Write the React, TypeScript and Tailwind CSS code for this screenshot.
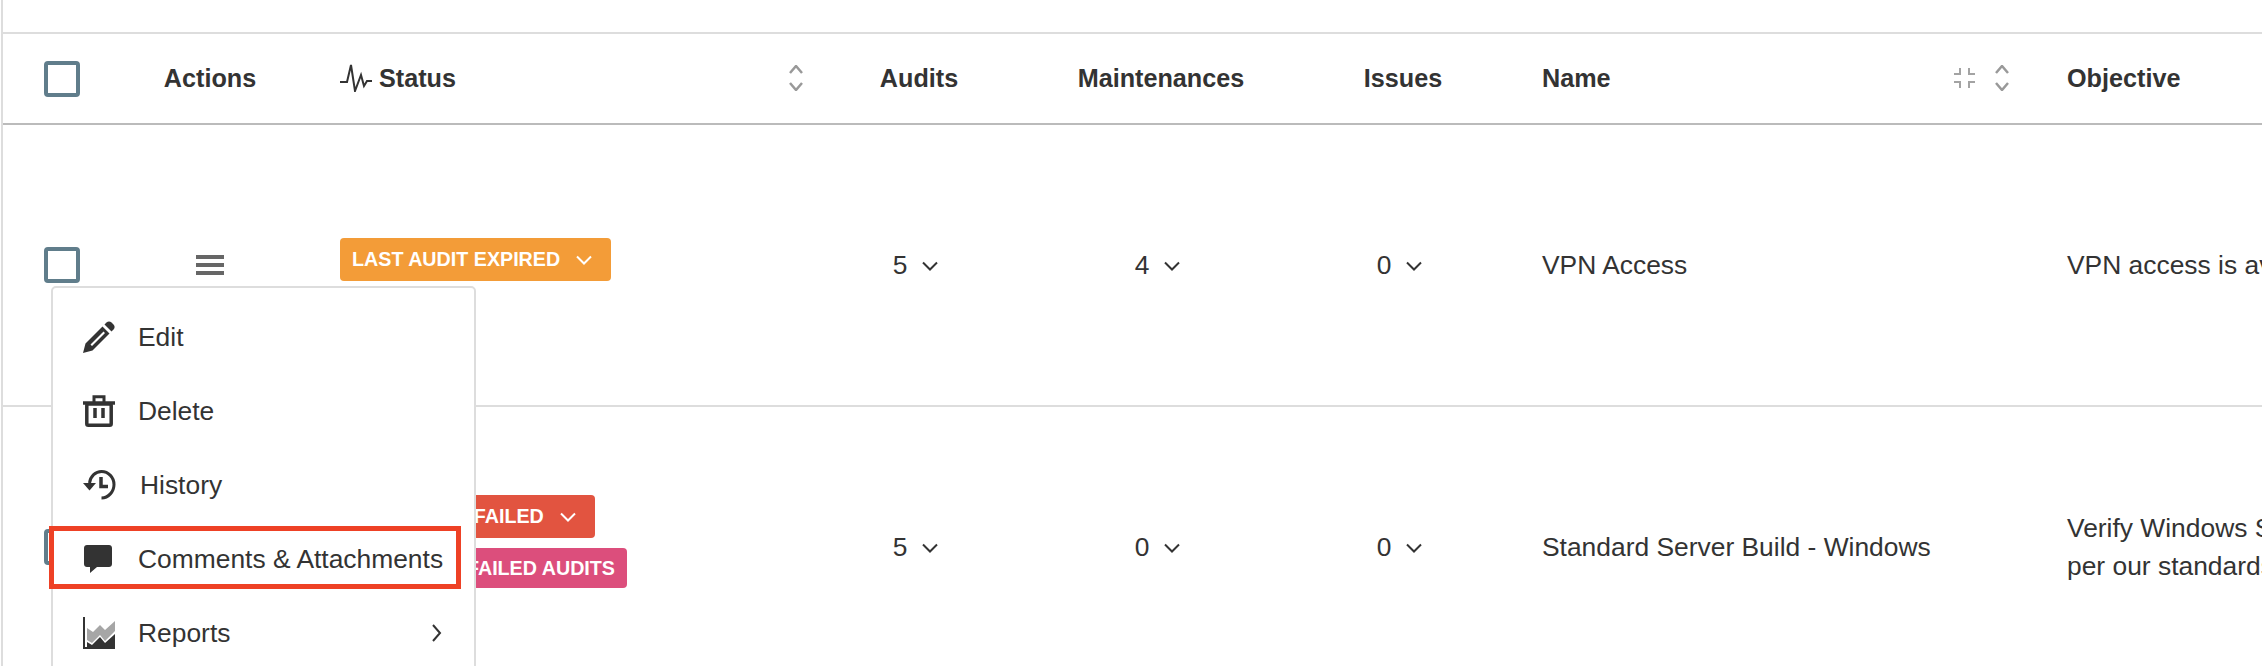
import React from "react";

const rowGrid =
  "grid grid-cols-[137px_140px_540px_198px_286px_198px_525px_1fr] items-center";

function Checkbox() {
  return <span className="block w-9 h-9 border-4 border-[#607d8b] rounded-[4px] bg-white" />;
}

function SortIcon() {
  return (
    <svg width="14" height="26" viewBox="0 0 14 26" fill="none" stroke="#999" strokeWidth="2.500">
      <path d="M1 8l6-7 6 7M1 18l6 7 6-7" />
    </svg>
  );
}

function Chevron({ color = "#333", className = "" }: { color?: string; className?: string }) {
  return (
    <svg width="18" height="10" viewBox="0 0 18 10" fill="none" stroke={color} strokeWidth="2" className={className}>
      <path d="M2 1.500l7 7 7-7" />
    </svg>
  );
}

function Count({ value }: { value: number }) {
  return (
    <div className="flex items-center justify-center gap-[14px] pr-[6px] pt-[2px]">
      <span>{value}</span>
      <Chevron />
    </div>
  );
}

function Badge({ label, bg, chevron, className = "" }: { label: string; bg: string; chevron?: boolean; className?: string }) {
  return (
    <span className={`inline-flex items-center rounded-[4px] pl-3 pt-[1px] text-white font-bold text-[19.700px] leading-none ${bg} ${className}`}>
      {label}
      {chevron && <Chevron color="#fff" className="ml-[15px] mr-[18px]" />}
    </span>
  );
}

function PencilIcon() {
  return (
    <svg width="32" height="32" viewBox="0 0 32 32" fill="#333">
      <path
        d="M0 32l2.500-9.500L19.500 5.500l7 7L9.500 29.500z M7.500 23.500L20.500 10.500l1.500 1.500L9 25z"
        fillRule="evenodd"
      />
      <path d="M21.500 3.500l2-2c1.500-1.500 3.500-1.500 5 0l2 2c1.500 1.500 1.500 3.500 0 5l-2 2z" />
    </svg>
  );
}

function TrashIcon() {
  return (
    <svg width="32" height="32" viewBox="0 0 32 32" fill="none" stroke="#333" strokeWidth="3.500">
      <path d="M0 8h32" />
      <path d="M11 7V1.800h10V7" strokeWidth="3" />
      <rect x="3.800" y="9" width="24.400" height="21.200" rx="1.500" />
      <path d="M12 13v10M20 13v10" />
    </svg>
  );
}

function HistoryIcon() {
  return (
    <svg width="33" height="30" viewBox="0 0 33 30" fill="none" stroke="#333" strokeWidth="3">
      <path d="M6.500 13C7.500 6 12.500 1.500 18.500 1.500c7 0 12.500 6 12.500 13s-5.500 13.500-12.500 13.500" />
      <path d="M18 7v9.500h7" strokeWidth="3.500" />
      <path d="M0 13h13l-6.500 7.500z" fill="#333" stroke="none" />
    </svg>
  );
}

function CommentIcon() {
  return (
    <svg width="28" height="28" viewBox="0 0 28 28" fill="#333" className="ml-[1px]">
      <path d="M3 0h22c1.700 0 3 1.300 3 3v16c0 1.700-1.300 3-3 3H13l-7 6v-6H3c-1.700 0-3-1.300-3-3V3c0-1.700 1.300-3 3-3z" />
    </svg>
  );
}

function ReportsIcon() {
  return (
    <svg width="32" height="32" viewBox="0 0 32 32">
      <path d="M1 0v31h31" fill="none" stroke="#333" strokeWidth="2" />
      <path d="M4 11l6 4 7-7 5 5 10-9v10l-10 10-5-6-8 8-5-3z" fill="#a6a6a6" />
      <path d="M4 25l5 3 8-8 5 6 10-9v13H4z" fill="#333" />
    </svg>
  );
}

const menuItems = [
  { icon: PencilIcon, label: "Edit", labelClass: "" },
  { icon: TrashIcon, label: "Delete", labelClass: "" },
  { icon: HistoryIcon, label: "History", labelClass: "ml-[2px]" },
  { icon: CommentIcon, label: "Comments & Attachments", labelClass: "" },
  { icon: ReportsIcon, label: "Reports", labelClass: "", more: true },
];

function ActionMenu() {
  return (
    <div className="absolute left-[48px] top-[286px] w-[425px] h-[400px] bg-white border-2 border-[#ddd] rounded-t-[5px] pt-3 whitespace-nowrap">
      {menuItems.map((item) => (
        <div key={item.label} className="h-[74px] flex items-center pl-[30px] pr-[32px]">
          <span className="w-[55px] shrink-0 flex items-center">
            <item.icon />
          </span>
          <span className={`${item.labelClass} pt-[2px]`}>{item.label}</span>
          {item.more && (
            <svg width="10" height="18" viewBox="0 0 10 18" fill="none" stroke="#333" strokeWidth="2" className="ml-auto">
              <path d="M1 1l7 8-7 8" />
            </svg>
          )}
        </div>
      ))}
    </div>
  );
}

export default function App() {
  return (
    <div className="relative h-[666px] overflow-hidden bg-white border-l-2 ml-px border-[#ddd] text-[#333] text-[26.400px] font-['Liberation_Sans',sans-serif]">
      <div className="h-[32px]" />
      <div className={`${rowGrid} h-[93px] border-y-2 border-t-[#ddd] border-b-[#bbb] font-bold text-[25.200px]`}>
        <div className="pl-[41px]">
          <Checkbox />
        </div>
        <div className="text-center">Actions</div>
        <div className="flex items-center justify-between pl-[60px] pr-[17px]">
          <div className="flex items-center gap-[7px]">
            <svg width="32" height="28" viewBox="0 0 32 28" fill="none" stroke="#333" strokeWidth="2">
              <path d="M0 18h7l4-17 4 26 6-16 3 11 3-5h5" />
            </svg>
            <span>Status</span>
          </div>
          <SortIcon />
        </div>
        <div className="text-center">Audits</div>
        <div className="text-center">Maintenances</div>
        <div className="text-center">Issues</div>
        <div className="flex items-center justify-between pl-10 pr-[18px]">
          <span>Name</span>
          <div className="flex items-center gap-5">
            <svg width="21" height="20" viewBox="0 0 21 20" fill="none" stroke="#a3a3a3" strokeWidth="2">
              <path d="M0 6h6V0M15 0v6h6M0 14h6v6M15 20v-6h6" />
            </svg>
            <SortIcon />
          </div>
        </div>
        <div className="pl-10 whitespace-nowrap">Objective</div>
      </div>

      <div className={`${rowGrid} h-[282px] border-b-2 border-[#ddd]`}>
        <div className="pl-[41px]">
          <Checkbox />
        </div>
        <div className="flex flex-col items-center gap-1">
          <span className="w-7 h-1 bg-[#666]" />
          <span className="w-7 h-1 bg-[#666]" />
          <span className="w-7 h-1 bg-[#666]" />
        </div>
        <div className="pl-[60px] pb-[11px]">
          <Badge label="LAST AUDIT EXPIRED" bg="bg-[#f39c38]" chevron className="h-[43px]" />
        </div>
        <Count value={5} />
        <Count value={4} />
        <Count value={0} />
        <div className="pl-10 pt-[2px]">VPN Access</div>
        <div className="pl-10 pt-[2px] whitespace-nowrap">VPN access is available</div>
      </div>

      <div className={`${rowGrid} h-[280px]`}>
        <div className="pl-[41px]">
          <Checkbox />
        </div>
        <div />
        <div className="pl-[60px] flex flex-col items-start gap-[10px] pb-[11px]">
          <Badge label="LAST AUDIT FAILED" bg="bg-[#e25440]" chevron className="h-[43px]" />
          <Badge label="FAILED AUDITS" bg="bg-[#dc4e7c]" className="h-10 w-[287px] justify-end pr-3" />
        </div>
        <Count value={5} />
        <Count value={0} />
        <Count value={0} />
        <div className="pl-10 pt-[2px]">Standard Server Build - Windows</div>
        <div className="pl-10 whitespace-nowrap leading-[38px]">
          Verify Windows Servers are built
          <br />
          per our standards
        </div>
      </div>

      <ActionMenu />
      <div className="absolute left-[46px] top-[526px] w-[412px] h-[63px] border-[5px] border-[#ee4125]" />
    </div>
  );
}
